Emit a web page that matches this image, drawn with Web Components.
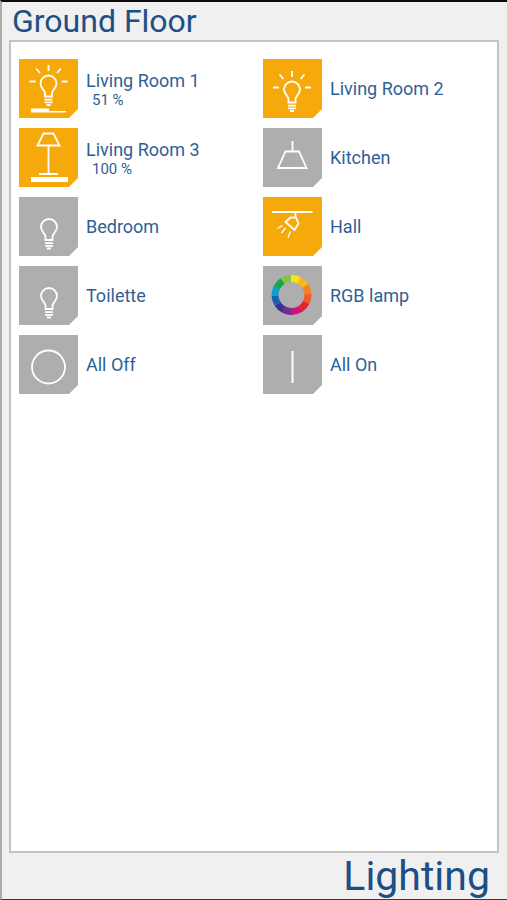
<!DOCTYPE html>
<html lang="en">
<head>
<meta charset="utf-8">
<meta name="viewport" content="width=device-width, initial-scale=1">
<title>Ground Floor – Lighting</title>
<style>
  html { background: #f0f0f0; }
  body { margin: 0; font-family: Roboto, "Liberation Sans", sans-serif; color: #1d4f86; }
</style>
</head>
<body>
<floor-page heading="Ground Floor" section="Lighting">
  <light-tile label="Living Room 1" value="51 %" icon="dimmer" on></light-tile>
  <light-tile label="Living Room 2" icon="bulb-on" on></light-tile>
  <light-tile label="Living Room 3" value="100 %" icon="floor-lamp" on></light-tile>
  <light-tile label="Kitchen" icon="pendant"></light-tile>
  <light-tile label="Bedroom" icon="bulb"></light-tile>
  <light-tile label="Hall" icon="spot" on></light-tile>
  <light-tile label="Toilette" icon="bulb"></light-tile>
  <light-tile label="RGB lamp" icon="rgb"></light-tile>
  <light-tile label="All Off" icon="off"></light-tile>
  <light-tile label="All On" icon="all-on"></light-tile>
</floor-page>
<script>
  const BULB = '<path d="M26 37.500v-3.500c0-2.500-4.500-5-4.500-9.500a8 8 0 0 1 16 0c0 4.500-4.500 7-4.500 9.500v3.500z"/><path d="M25.500 40.700h8M25.500 43.300h8M27.500 46h4"/>';
  const RAYS = '<path d="M29.500 6v6M17 9.500l4 4.500M42 9.500l-4 4.500M10.500 22.500h6M42.500 22.500h6"/>';
  const hues = ['#f6e614', '#fbb615', '#f58220', '#f05a24', '#e8202b', '#d0147c', '#7b2a90', '#3b2f8f', '#1c5fae', '#0d9fc4', '#17a650', '#86c440'];
  const point = (r, a) => (28.5 + r * Math.sin(a)).toFixed(2) + ' ' + (29 - r * Math.cos(a)).toFixed(2);
  const wheel = hues.map((c, i) => {
    const a = i * Math.PI / 6 - 0.05, b = a + Math.PI / 6 + 0.01;
    return `<path fill="${c}" stroke="none" d="M${point(20, a)}A20 20 0 0 1 ${point(20, b)}L${point(13, b)}A13 13 0 0 0 ${point(13, a)}Z"/>`;
  }).join('');

  const ICONS = {
    'dimmer': BULB + RAYS + '<path fill="#fff" stroke="none" d="M12 49.500h18v2.500h17v1.500H12z"/>',
    'bulb-on': `<g transform="translate(-.5 6)">${BULB}${RAYS}</g>`,
    'bulb': `<g transform="translate(.5 5.500)">${BULB}</g>`,
    'floor-lamp': '<path d="M24.500 5.500h10l6 12h-22zM29.500 18v28M20 46h19"/><path fill="#fff" stroke="none" d="M12 49h37v5H12z"/>',
    'pendant': '<path d="M29.500 13v10.500M22.500 23.500h13.500l7.500 16.500H15z"/>',
    'spot': '<path stroke-width="2" d="M9 15h40.500"/><path d="M32.500 15v5.500M22.500 25l5-4.500h5.500l2.500 6-4 6.500z"/><path stroke-width="1.300" d="M19.500 28.500l-5 3M22.500 31l-4 5M27.500 34.500l-2.500 6"/>',
    'rgb': wheel,
    'off': '<circle cx="29.500" cy="32" r="16.500"/>',
    'all-on': '<path stroke-width="2" d="M29.500 16v32"/>'
  };

  customElements.define('light-icon', class extends HTMLElement {
    connectedCallback() {
      this.attachShadow({ mode: 'open' }).innerHTML = `
        <style>
          :host { display: block; flex: none; width: 59px; height: 59px; background: var(--tile, #aeaeae);
            clip-path: polygon(0 0, 100% 0, 100% calc(100% - 9px), calc(100% - 9px) 100%, 0 100%); }
          svg { display: block; width: 100%; height: 100%; fill: none; stroke: #fff; stroke-width: 1.8; }
        </style>
        <svg viewBox="0 0 59 59" aria-hidden="true">${ICONS[this.getAttribute('name')]}</svg>`;
    }
  });

  customElements.define('light-tile', class extends HTMLElement {
    connectedCallback() {
      const value = this.getAttribute('value');
      const on = this.hasAttribute('on');
      this.attachShadow({ mode: 'open' }).innerHTML = `
        <style>
          :host { display: block; min-width: 0; }
          :host([on]) { --tile: #f6a90a; }
          button { display: flex; align-items: center; gap: 8px; width: 100%; margin: 0; padding: 0; border: 0;
            background: none; color: #2f5f96; font: inherit; text-align: left; cursor: pointer; }
          .text { display: flex; flex-direction: column; }
          .label { font-size: 18px; line-height: 22px; }
          .value { font-size: 15px; line-height: 16px; padding-left: 6px; }
        </style>
        <button type="button" aria-pressed="${on}">
          <light-icon name="${this.getAttribute('icon')}"></light-icon>
          <span class="text"><span class="label">${this.getAttribute('label')}</span>${value ? `<span class="value">${value}</span>` : ''}</span>
        </button>`;
    }
  });

  customElements.define('floor-page', class extends HTMLElement {
    connectedCallback() {
      this.attachShadow({ mode: 'open' }).innerHTML = `
        <style>
          :host { display: flex; flex-direction: column; box-sizing: border-box; min-height: 100vh;
            padding: 0 8px 0 7px; background: #f0f0f0; border-top: 2px solid #0c0a0c;
            border-left: 2px solid #acacac; border-bottom: 1px solid #3a3a3e; }
          h1, h2 { margin: 0; font-weight: 400; }
          h1 { font-size: 32px; line-height: 38px; padding-left: 3px; }
          main { flex: 1; border: 2px solid #c3c3c3; background: #fff; padding: 17px 8px; }
          .grid { display: grid; grid-template-columns: 1fr 1fr; gap: 10px 18px; }
          h2 { font-size: 41px; line-height: 46px; text-align: right; padding-right: 9px; }
        </style>
        <h1>${this.getAttribute('heading')}</h1>
        <main><div class="grid"><slot></slot></div></main>
        <h2>${this.getAttribute('section')}</h2>`;
    }
  });
</script>
</body>
</html>
